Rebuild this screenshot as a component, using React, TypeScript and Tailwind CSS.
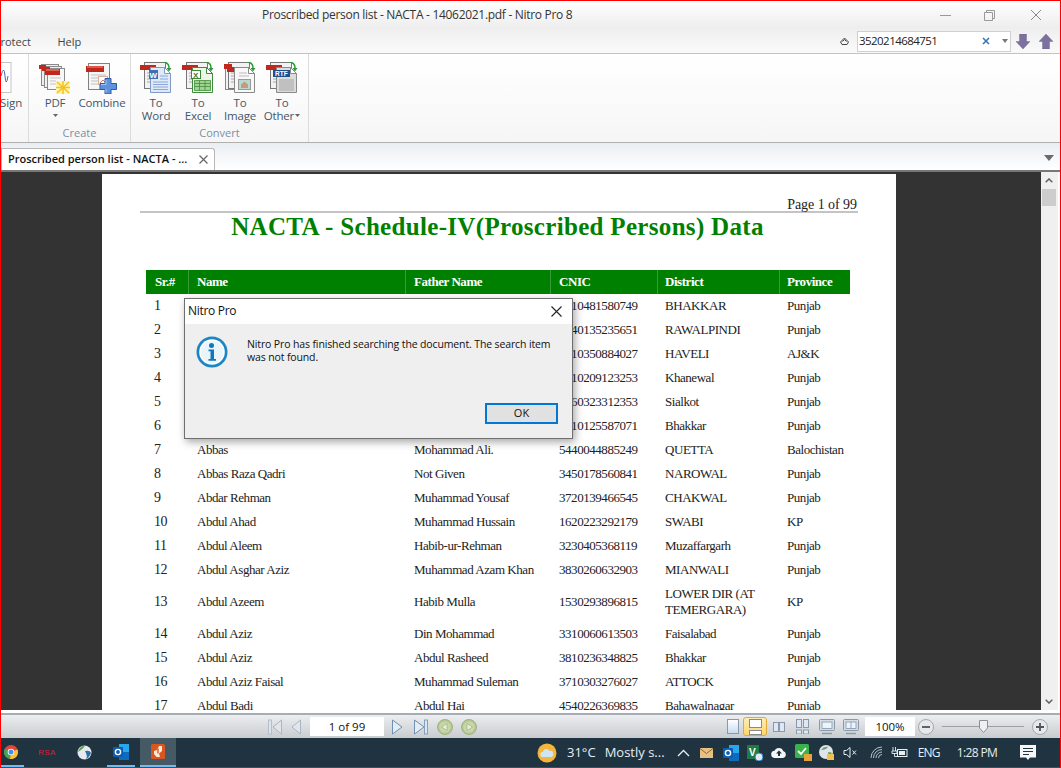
import React from "react";

const ui = "font-['Open_Sans','Noto_Sans',sans-serif]";

type Row = [string, string, string, string, string, string];
const rows: Row[] = [
  ["1", "", "", "3810481580749", "BHAKKAR", "Punjab"],
  ["2", "", "", "3740135235651", "RAWALPINDI", "Punjab"],
  ["3", "", "", "8210350884027", "HAVELI", "AJ&K"],
  ["4", "", "", "3610209123253", "Khanewal", "Punjab"],
  ["5", "", "", "3460323312353", "Sialkot", "Punjab"],
  ["6", "", "", "3810125587071", "Bhakkar", "Punjab"],
  ["7", "Abbas", "Mohammad Ali.", "5440044885249", "QUETTA", "Balochistan"],
  ["8", "Abbas Raza Qadri", "Not Given", "3450178560841", "NAROWAL", "Punjab"],
  ["9", "Abdar Rehman", "Muhammad Yousaf", "3720139466545", "CHAKWAL", "Punjab"],
  ["10", "Abdul Ahad", "Muhammad Hussain", "1620223292179", "SWABI", "KP"],
  ["11", "Abdul Aleem", "Habib-ur-Rehman", "3230405368119", "Muzaffargarh", "Punjab"],
  ["12", "Abdul Asghar Aziz", "Muhammad Azam Khan", "3830260632903", "MIANWALI", "Punjab"],
  ["13", "Abdul Azeem", "Habib Mulla", "1530293896815", "LOWER DIR (AT TEMERGARA)", "KP"],
  ["14", "Abdul Aziz", "Din Mohammad", "3310060613503", "Faisalabad", "Punjab"],
  ["15", "Abdul Aziz", "Abdul Rasheed", "3810236348825", "Bhakkar", "Punjab"],
  ["16", "Abdul Aziz Faisal", "Muhammad Suleman", "3710303276027", "ATTOCK", "Punjab"],
  ["17", "Abdul Badi", "Abdul Hai", "4540226369835", "Bahawalnagar", "Punjab"],
];

function PdfIcon() {
  return (
    <svg width="32" height="32" viewBox="0 0 32 32" className="block">
      <rect x="2.5" y="2.5" width="17" height="21" fill="#efefef" stroke="#8a8a8a" />
      <rect x="5.500" y="4.500" width="17" height="21" fill="#f2f2f2" stroke="#8a8a8a" />
      <rect x="8.500" y="6.500" width="17" height="21" fill="#f8f8f8" stroke="#8a8a8a" />
      <path d="M11 16h11M11 19h6M11 22h6" stroke="#c4c4c4" />
      <rect x="0" y="3" width="7" height="4" fill="#c0281e" />
      <rect x="3" y="5" width="8" height="4" fill="#c0281e" />
      <rect x="6" y="7" width="15" height="6" fill="#c0281e" />
      <rect x="7" y="7" width="13" height="2" fill="#e0604e" />
      <rect x="17" y="19" width="14" height="13" fill="#fff3b0" />
      <path d="M24 19v13M17 25.500h14M18 20l12 11M30 20L18 31" stroke="#f6c11d" strokeWidth="1.500" />
    </svg>
  );
}

function CombineIcon() {
  return (
    <svg width="32" height="32" viewBox="0 0 32 32" className="block">
      <rect x="2.500" y="1.500" width="21" height="26" fill="#f6f6f6" stroke="#808080" />
      <path d="M5 13h15M5 16h7M5 19h7M5 22h7" stroke="#c0c0c0" />
      <rect x="12.500" y="14.500" width="9" height="8" fill="#fff" stroke="#d8b0a0" />
      <path d="M14 21l3-3 2 2" fill="none" stroke="#d08070" />
      <rect x="0" y="4" width="18" height="6" fill="#c0281e" />
      <rect x="1" y="4" width="16" height="2" fill="#de5a48" />
      <path d="M19 16.500h6v5h5.500v6H25v4.500h-6v-4.500h-5v-6h5z" fill="#5f92dc" stroke="#2b5aa4" />
      <path d="M20 18v4.500h-5M20 27v3.500" fill="none" stroke="#a8c8f0" />
    </svg>
  );
}

function ConvertIcon({ kind }: { kind: "word" | "excel" | "image" | "other" }) {
  const fill = kind === "word" ? "#dfe9f8" : kind === "excel" ? "#eef6ea" : kind === "image" ? "#f8f8f8" : "#dcdcdc";
  const edge = kind === "word" ? "#7f9cc8" : kind === "excel" ? "#3f8a3f" : "#8a8a8a";
  return (
    <svg width="32" height="32" viewBox="0 0 32 32" className="block">
      {kind === "image" && <rect x="1.500" y="2.500" width="19" height="25" fill="#f2f2f2" stroke="#888" />}
      <rect x="4.500" y="0.500" width="21" height="26" fill="#f2f2f2" stroke="#777" />
      <path d="M7 11h4M7 14h4M7 17h4M7 20h4" stroke="#a8a8a8" />
      {kind === "image" && <rect x="0" y="2" width="8" height="5" fill="#c0281e" />}
      <rect x={kind === "image" ? 3 : 0} y={kind === "image" ? 5 : 3} width={kind === "image" ? 10 : 16} height="5" fill="#c0281e" />
      <path d="M24 0q5 1 5 6" fill="none" stroke="#2f9a3c" strokeWidth="1.500" />
      <path d="M26.500 6l2.500 3.500 2.500-3.500z" fill="#2f9a3c" />
      <path d="M10.500 5.500h14l6 6v19h-20z" fill={fill} stroke={edge} />
      <path d="M24.500 5.500v6h6z" fill="#fff" stroke={edge} />
      {kind === "word" && (
        <>
          <rect x="9" y="8" width="9" height="9" fill="#3f6fb5" />
          <text x="9.500" y="15.500" fontSize="8" fontWeight="700" fill="#fff" fontFamily="Liberation Sans">W</text>
          <path d="M13 20h15M13 22.500h15M13 25h15M13 27.500h15M20 14h8M20 17h8" stroke="#8aa8d8" />
        </>
      )}
      {kind === "excel" && (
        <>
          <rect x="9.500" y="8.500" width="9" height="8" fill="#fff" stroke="#3a8a3a" />
          <text x="11" y="15.500" fontSize="8" fontWeight="700" fill="#2f7f2f" fontFamily="Liberation Sans">X</text>
          <path d="M12.500 18.500h16v10h-16zM12.500 21.500h16M12.500 24.500h16M17.500 18.500v10M23 18.500v10" fill="#a4d090" stroke="#3f8f3f" strokeWidth="0.800" />
        </>
      )}
      {kind === "image" && (
        <>
          <path d="M15 11h8M15 14h10" stroke="#bbb" />
          <rect x="14.500" y="17.500" width="12" height="10" fill="#b8d8d0" stroke="#999" />
          <path d="M17 26v-3.500l3.500-3 3.500 3V26z" fill="#c89a7a" />
        </>
      )}
      {kind === "other" && (
        <>
          <rect x="7" y="8" width="17" height="7" fill="#1f4f8f" />
          <text x="9" y="14" fontSize="6.500" fontWeight="700" fill="#fff" fontFamily="Liberation Sans">RTF</text>
          <path d="M13 18h15M13 20h15M13 22h15M13 24h15M13 26h15M13 28h15" stroke="#a4a4a4" />
        </>
      )}
    </svg>
  );
}

function RibbonButton({ l1, l2, caret, icon, w = "w-[42px]" }: { l1: string; l2?: string; caret?: boolean; icon: React.ReactNode; w?: string }) {
  return (
    <div className={`${w} flex flex-col items-center shrink-0`}>
      <div className="h-[32px] flex justify-center">{icon}</div>
      <div className="mt-[2px] text-[11.5px] leading-[13px] tracking-[-0.2px] text-[#46566b] text-center whitespace-nowrap">{l1}</div>
      {l2 && (
        <div className="text-[11.5px] leading-[13px] tracking-[-0.2px] text-[#46566b] text-center whitespace-nowrap flex items-center">
          {l2}
          {caret && (
            <svg width="5" height="3" viewBox="0 0 5 3" className="ml-[1px] block"><path d="M0 0h5L2.500 3z" fill="#666" /></svg>
          )}
        </div>
      )}
      {!l2 && caret && (
        <svg width="5" height="3" viewBox="0 0 5 3" className="mt-[5px] block"><path d="M0 0h5L2.500 3z" fill="#666" /></svg>
      )}
    </div>
  );
}

function ArrowBig({ up }: { up?: boolean }) {
  return (
    <svg width="14" height="15" viewBox="0 0 14 15" className={up ? "block" : "block rotate-180"}>
      <path d="M7 0l7 7.500h-3.500V15h-7V7.500H0z" fill="#7b709f" stroke="#6a6088" strokeWidth="0.400" />
    </svg>
  );
}

function NavTri({ dir, bar }: { dir: "l" | "r"; bar?: boolean }) {
  return (
    <svg width="15" height="16" viewBox="0 0 15 16" className="block">
      {dir === "l" ? (
        <>
          {bar && <rect x="0.500" y="1" width="3" height="14" fill="#dfe4ea" stroke="#aab6c4" strokeWidth="0.800" />}
          <path d="M13.500 1v14L5 8z" fill="#e2e6ea" stroke="#aab6c4" />
        </>
      ) : (
        <>
          <path d="M1.500 1v14L11 8z" fill="#e4ecf4" stroke="#7090b4" />
          {bar && <rect x="11.500" y="1" width="3" height="14" fill="#dbe6f2" stroke="#7090b4" strokeWidth="0.800" />}
        </>
      )}
    </svg>
  );
}

function GreenNav({ right }: { right?: boolean }) {
  return (
    <svg width="16" height="16" viewBox="0 0 16 16" className="block">
      <circle cx="8" cy="8" r="7.500" fill="#b6c794" stroke="#9fb27a" />
      <circle cx="8" cy="8" r="5.600" fill="#c9d6ac" />
      <path d={right ? "M6 4.500v7l5.500-3.500z" : "M10 4.500v7L4.500 8z"} fill="#e9efd8" stroke="#95a871" strokeWidth="0.600" />
    </svg>
  );
}

function ViewIcon({ kind }: { kind: number }) {
  if (kind === 0) return <div className="w-[12px] h-[15px] bg-gradient-to-b from-white to-[#c8dcf2] border border-[#8a98a8]" />;
  if (kind === 1)
    return (
      <svg width="15" height="16" viewBox="0 0 15 16" className="block">
        <rect x="1.500" y="0.500" width="12" height="8" fill="#fff" stroke="#8a8a8a" />
        <rect x="1.500" y="11.500" width="12" height="4" fill="#fff" stroke="#8a8a8a" />
      </svg>
    );
  if (kind === 2)
    return (
      <svg width="12" height="10" viewBox="0 0 12 10" className="block">
        <rect x="0.500" y="0.500" width="5" height="9" fill="#dce8f6" stroke="#8a98a8" />
        <rect x="6.500" y="0.500" width="5" height="9" fill="#dce8f6" stroke="#8a98a8" />
      </svg>
    );
  if (kind === 3)
    return (
      <svg width="13" height="15" viewBox="0 0 13 15" className="block">
        <rect x="0.500" y="0.500" width="5" height="8" fill="#dce8f6" stroke="#8a98a8" />
        <rect x="7.500" y="0.500" width="5" height="8" fill="#dce8f6" stroke="#8a98a8" />
        <rect x="0.500" y="11" width="5" height="4" fill="#dce8f6" stroke="#8a98a8" />
        <rect x="7.500" y="11" width="5" height="4" fill="#dce8f6" stroke="#8a98a8" />
      </svg>
    );
  return (
    <svg width="16" height="16" viewBox="0 0 16 16" className="block">
      <rect x="0.500" y="0.500" width="15" height="11" rx="1" fill="#d8dde2" stroke="#8a98a8" />
      <rect x="3" y="3" width="10" height="6.500" fill="#eef3f8" stroke="#6f8aa8" strokeWidth="0.700" />
      {kind === 5 && <path d="M8 3v6.500" stroke="#6f8aa8" strokeWidth="0.700" />}
      <path d="M3 14.500h10" stroke="#8a98a8" strokeWidth="1.400" />
    </svg>
  );
}

function RoundBtn({ plus }: { plus?: boolean }) {
  return (
    <svg width="16" height="16" viewBox="0 0 16 16" className="block">
      <circle cx="8" cy="8" r="7.500" fill="#e6e8ea" stroke="#a2a8ae" />
      <path d={plus ? "M4 8h8M8 4v8" : "M4 8h8"} stroke="#4b5560" strokeWidth="1.800" />
    </svg>
  );
}

function InfoIcon() {
  return (
    <svg width="32" height="32" viewBox="0 0 32 32" className="block">
      <circle cx="16" cy="16" r="15.500" fill="#1c86c4" />
      <circle cx="16" cy="16" r="12.800" fill="#fff" />
      <circle cx="16" cy="16" r="11" fill="#eaf4fb" />
      <circle cx="15.500" cy="9.500" r="2.500" fill="#1178b8" />
      <path d="M12.500 13.500h5.500v9.500h2v1.800h-7.500V23h2v-7.700h-2z" fill="#1178b8" />
    </svg>
  );
}

function Chrome() {
  return (
    <svg width="14" height="14" viewBox="0 0 14 14" className="block">
      <circle cx="7" cy="7" r="7" fill="#e0483a" />
      <path d="M7 7L1 3.500A7 7 0 0 0 6 14z" fill="#3aa757" />
      <path d="M7 7l6.500-2.500A7 7 0 0 1 6 14z" fill="#f9c42d" />
      <circle cx="7" cy="7" r="3.300" fill="#fff" />
      <circle cx="7" cy="7" r="2.500" fill="#4a8af4" />
    </svg>
  );
}

function Globe() {
  return (
    <svg width="15" height="15" viewBox="0 0 15 15" className="block">
      <circle cx="7.500" cy="7.500" r="7" fill="#e6eaee" />
      <path d="M1 7C2 2.500 6 .5 8 .5 7 3 4 5 1 7z" fill="#5fa05a" />
      <path d="M8 6q5-1 6 2-2 5-5 6 2-3-1-8z" fill="#2f6f9f" />
    </svg>
  );
}

function Outlook() {
  return (
    <svg width="16" height="16" viewBox="0 0 16 16" className="block">
      <rect x="6" y="0" width="10" height="8" fill="#28a8ea" />
      <rect x="6" y="8" width="10" height="8" fill="#0f6cbd" />
      <rect x="0" y="3" width="10" height="10" rx="1" fill="#0a5fb4" />
      <circle cx="5" cy="8" r="2.600" fill="none" stroke="#fff" strokeWidth="1.400" />
    </svg>
  );
}

function NitroTask() {
  return (
    <svg width="14" height="15" viewBox="0 0 14 15" className="block">
      <rect width="14" height="15" rx="1.500" fill="#d9571e" />
      <path d="M8 2h3v5L8 9.500 9 13H5.500L3 10V7l3-1z" fill="#fbe9dc" />
      <path d="M7 4.500v5" stroke="#d9571e" strokeWidth="1.400" />
    </svg>
  );
}

function Weather() {
  return (
    <svg width="20" height="20" viewBox="0 0 20 20" className="block">
      <circle cx="10" cy="10" r="9.500" fill="#f4b63a" />
      <path d="M6 14a2.600 2.600 0 0 1 0-5.200 3.400 3.400 0 0 1 6.500-.8 3 3 0 0 1 1.500 6z" fill="#cfe4f4" />
    </svg>
  );
}

function Tray() {
  return (
    <div className="flex items-center text-[#e8eef2] h-full">
      <svg width="13" height="8" viewBox="0 0 13 8" className="ml-[10px] block"><path d="M1 7l5.500-5.500L12 7" fill="none" stroke="#e8eef2" strokeWidth="1.300" /></svg>
      <svg width="13" height="10" viewBox="0 0 13 10" className="ml-[10px] block"><rect width="13" height="10" fill="#e8c084" /><path d="M0 .5l6.500 5 6.500-5" fill="none" stroke="#8a6a3a" /></svg>
      <div className="ml-[10px]"><Outlook /></div>
      <svg width="16" height="16" viewBox="0 0 16 16" className="ml-[8px] block">
        <rect width="12" height="14" fill="#1f7a45" />
        <text x="2" y="11" fontSize="10" fontWeight="700" fill="#fff" fontFamily="Liberation Sans">V</text>
        <circle cx="12" cy="12" r="4" fill="#dfeaf4" stroke="#2f7fc0" />
      </svg>
      <svg width="16" height="11" viewBox="0 0 16 11" className="ml-[8px] block">
        <path d="M4 11a3.600 3.600 0 0 1-.4-7.200A4.600 4.600 0 0 1 12.200 4 3.600 3.600 0 0 1 12 11z" fill="#f4f6f8" />
        <path d="M8 3.500L5 6.500h2V9h2V6.500h2z" fill="#1f3340" />
      </svg>
      <svg width="17" height="17" viewBox="0 0 17 17" className="ml-[8px] block">
        <rect width="14" height="14" rx="1.500" fill="#38b54a" />
        <path d="M3 7l3 3 5-6" fill="none" stroke="#fff" strokeWidth="1.800" />
        <rect x="9" y="10" width="8" height="7" fill="#e9a23b" />
      </svg>
      <svg width="16" height="16" viewBox="0 0 16 16" className="ml-[7px] block">
        <circle cx="7" cy="7" r="7" fill="#dfe6ea" />
        <path d="M2 5q3-4 7-3-2 3-7 3zM9 7q3 0 4 1l-3 5z" fill="#6aa070" />
        <rect x="8" y="9" width="7" height="6" fill="#f3c14a" />
      </svg>
      <svg width="14" height="13" viewBox="0 0 14 13" className="ml-[8px] block">
        <path d="M1 4.500h2.500L7 1.500v10L3.500 8.500H1z" fill="none" stroke="#e8eef2" />
        <path d="M9.500 4.500l3.500 4M13 4.500l-3.500 4" stroke="#e8eef2" />
      </svg>
      <svg width="13" height="13" viewBox="0 0 13 13" className="ml-[13px] block">
        <path d="M1 12a11 11 0 0 1 11-11M3.500 12A8.500 8.500 0 0 1 12 3.500M6 12a6 6 0 0 1 6-6M8.500 12A3.500 3.500 0 0 1 12 8.500" fill="none" stroke="#c5ced4" strokeWidth="0.900" />
      </svg>
      <svg width="17" height="12" viewBox="0 0 17 12" className="ml-[8px] block">
        <path d="M2 0v4M4.500 0v4M1 4h5v2.500H1zM3.500 6.500v3H6" fill="none" stroke="#e8eef2" strokeWidth="0.900" />
        <rect x="6.500" y="2.500" width="9.500" height="7" fill="none" stroke="#e8eef2" />
        <rect x="8" y="4" width="6" height="4" fill="#e8eef2" />
      </svg>
      <span className="ml-[10px] w-[29px] text-[12px] tracking-[-0.8px]">ENG</span>
      <span className="ml-[10px] w-[46px] text-[12px] tracking-[-0.6px] whitespace-nowrap">1:28 PM</span>
      <svg width="16" height="16" viewBox="0 0 16 16" className="ml-[17px] block">
        <path d="M0 0h16v12.500H10l-2 2.500-2-2.500H0z" fill="#f4f6f8" />
        <path d="M3 3.500h10M3 6.500h10M3 9.500h6" stroke="#1f3340" />
      </svg>
    </div>
  );
}

const headPad = ["pl-[9px]", "pl-[8px]", "pl-[8px]", "pl-[8px]", "pl-[7px]", "pl-[7px]"];
const cellPad = ["pl-[8px]", "pl-[9px]", "pl-[9px]", "pl-[9px]", "pl-[8px]", "pl-[8px]"];

export default function App() {
  return (
    <div className={`${ui} relative w-[1061px] h-[768px] overflow-hidden border border-[#ff0000] bg-white flex flex-col`}>
      {/* title + menu */}
      <div className="h-[53px] shrink-0 border-b border-[#c2c2c2] bg-gradient-to-b from-white via-[#eeeeee] to-[#fafafa] flex flex-col">
        <div className="h-[28px] flex items-center pl-[261px]">
          <span className="text-[12px] tracking-[-0.3px] text-[#333] whitespace-nowrap">Proscribed person list - NACTA - 14062021.pdf - Nitro Pro 8</span>
          <div className="ml-auto flex items-center pr-[18px]">
            <div className="w-[11px] h-px bg-[#999]" />
            <svg width="11" height="11" viewBox="0 0 11 11" className="ml-[33px] block"><path d="M.5 2.500h8v8h-8zM2.500 2.500v-2h8v8h-2" fill="none" stroke="#999" /></svg>
            <svg width="12" height="12" viewBox="0 0 12 12" className="ml-[35px] block"><path d="M1 1l10 10M11 1L1 11" stroke="#8a8a8a" /></svg>
          </div>
        </div>
        <div className="flex-1 flex items-center text-[11px] text-[#444]">
          <span className="w-[57px] pt-[3px] -ml-[0.5px] overflow-hidden whitespace-nowrap">rotect</span>
          <span className="pt-[3px]">Help</span>
          <div className="ml-auto flex items-center pr-[7px]">
            <svg width="9" height="8" viewBox="0 0 9 8" className="block"><path d="M.5 5l4-4 4 4-1.500 2.500h-5zM2.500 4.500l2-2 2 2" fill="none" stroke="#444" /></svg>
            <div className="ml-[8px] w-[154px] h-[21px] bg-white border border-[#d0d0d0] flex items-center pl-[1px] pr-[2px]">
              <span className="text-[11.5px] tracking-[-0.55px] text-[#222]">3520214684751</span>
              <svg width="8" height="8" viewBox="0 0 8 8" className="ml-auto block"><path d="M1 1l6 6M7 1L1 7" stroke="#3a77b0" strokeWidth="1.600" /></svg>
              <svg width="6" height="4" viewBox="0 0 6 4" className="ml-[12px] block"><path d="M0 0h6L3 4z" fill="#777" /></svg>
            </div>
            <div className="ml-[5px]"><ArrowBig /></div>
            <div className="ml-[9px]"><ArrowBig up /></div>
          </div>
        </div>
      </div>

      {/* ribbon */}
      <div className="h-[89px] shrink-0 border-b border-[#b0b0b0] bg-gradient-to-b from-white to-[#f6f6f6] flex">
        <div className="w-[28px] border-r border-[#dcdcdc] pt-[8px] overflow-hidden relative">
          <svg width="11" height="31" viewBox="0 0 11 31" className="block">
            <rect x="-4" y="0.500" width="14" height="30" fill="#fff" stroke="#c4c4c4" />
            <path d="M0 14q3-12 4 0t3 0" fill="none" stroke="#3d6fb8" />
          </svg>
          <div className="absolute left-[-1px] top-[41px] text-[11.5px] leading-[16px] tracking-[-0.1px] text-[#46566b]">Sign</div>
        </div>
        <div className="w-[102px] border-r border-[#dcdcdc] flex flex-col">
          <div className="flex pt-[8px] pl-[5px] gap-[2px] flex-1">
            <RibbonButton l1="PDF" caret icon={<PdfIcon />} />
            <RibbonButton l1="Combine" w="w-[48px]" icon={<CombineIcon />} />
          </div>
          <div className="text-[11px] text-center text-[#7f8ea3] pb-[1px]">Create</div>
        </div>
        <div className="w-[178px] border-r border-[#dcdcdc] flex flex-col">
          <div className="flex pt-[8px] pl-[4px] flex-1">
            <RibbonButton l1="To" l2="Word" icon={<ConvertIcon kind="word" />} />
            <RibbonButton l1="To" l2="Excel" icon={<ConvertIcon kind="excel" />} />
            <RibbonButton l1="To" l2="Image" icon={<ConvertIcon kind="image" />} />
            <RibbonButton l1="To" l2="Other" caret icon={<ConvertIcon kind="other" />} />
          </div>
          <div className="text-[11px] text-center text-[#7f8ea3] pb-[1px]">Convert</div>
        </div>
      </div>

      {/* tab strip */}
      <div className="h-[27px] shrink-0 bg-gradient-to-b from-[#eaeef3] to-white flex items-end">
        <div className="w-[214px] h-[22px] bg-white border border-b-0 border-[#b8b8b8] rounded-tr-[3px] flex items-center pl-[6px]">
          <span className="text-[11px] font-semibold text-[#111] whitespace-nowrap">Proscribed person list - NACTA - ...</span>
          <svg width="9" height="9" viewBox="0 0 9 9" className="ml-auto mr-[6px] block"><path d="M.5.5l8 8M8.500.5l-8 8" stroke="#666" strokeWidth="1.200" /></svg>
        </div>
        <svg width="10" height="6" viewBox="0 0 10 6" className="ml-auto mr-[6px] mb-[9px] block"><path d="M0 0h10L5 6z" fill="#6a6a6a" /></svg>
      </div>

      {/* document */}
      <div className="flex-1 min-h-0 flex border-t-2 border-[#777] bg-[#333333]">
        <div className="w-[101px] shrink-0" />
        <div className="w-[794px] mt-[2px] shrink-0 bg-white overflow-hidden font-['Liberation_Serif',serif] text-[13px] text-[#222] tracking-[-0.45px]">
          <div className="ml-[38px] mr-[38px] mt-[21px] h-[18px] border-b-2 border-[#c4c4c4] text-right text-[14px] leading-[20px] tracking-[-0.05px] pr-[1px]">
            Page 1 of 99
          </div>
          <h1 className="h-[30px] text-center ml-[-3px] text-[25px] leading-[27px] font-bold text-[#008000] tracking-[0.32px]">
            NACTA - Schedule-IV(Proscribed Persons) Data
          </h1>
          <div className="ml-[44px] mt-[27px] w-[704px]">
            <div className="grid grid-cols-[42px_217px_145px_107px_122px_71px] h-[24px] bg-[#008000] text-white font-bold">
              {["Sr.#", "Name", "Father Name", "CNIC", "District", "Province"].map((h, i) => (
                <div key={h} className={`${headPad[i]} flex items-center border-l border-[#3a9a3a] first:border-l-0 whitespace-nowrap`}>{h}</div>
              ))}
            </div>
            {rows.map((r) => (
              <div key={r[0]} className={`grid grid-cols-[42px_217px_145px_107px_122px_71px] ${r[0] === "13" ? "h-[40px]" : "h-[24px]"}`}>
                {r.map((c, i) => (
                  <div key={i} className={`${cellPad[i]} flex items-center leading-[16px] ${i === 0 ? "text-[14px]" : ""} ${i === 4 ? "pr-2" : "whitespace-nowrap"}`}>{c}</div>
                ))}
              </div>
            ))}
          </div>
        </div>
        <div className="w-[145px] shrink-0" />
        <div className="flex-1 bg-[#f0f0f0] border-r-2 border-white flex flex-col items-start">
          <div className="w-[15px] h-[17px] flex items-center justify-center">
            <svg width="8" height="5" viewBox="0 0 8 5" className="block"><path d="M.7 4.300L4 1l3.300 3.300" fill="none" stroke="#606060" strokeWidth="1.500" /></svg>
          </div>
          <div className="ml-[1px] w-[14px] h-[17px] bg-[#cdcdcd]" />
          <div className="flex-1" />
          <div className="w-[15px] h-[17px] flex items-center justify-center">
            <svg width="8" height="5" viewBox="0 0 8 5" className="block"><path d="M.7.7L4 4l3.300-3.300" fill="none" stroke="#606060" strokeWidth="1.500" /></svg>
          </div>
        </div>
      </div>

      {/* status */}
      <div className="h-[28px] shrink-0 border-t-[3px] border-white flex flex-col">
        <div className="flex-1 border-t-2 border-t-[#a6adb5] bg-gradient-to-b from-[#eceef0] to-[#c8ccd0] flex items-center pl-[267px] text-[#111]">
          <NavTri dir="l" bar />
          <div className="ml-[4px]"><NavTri dir="l" /></div>
          <div className="ml-[8px] w-[74px] h-[19px] bg-white text-[11.5px] leading-[19px] text-center">1 of 99</div>
          <div className="ml-[7px]"><NavTri dir="r" /></div>
          <div className="ml-[7px]"><NavTri dir="r" bar /></div>
          <div className="ml-[9px]"><GreenNav /></div>
          <div className="ml-[8px]"><GreenNav right /></div>
          <div className="ml-[250px]"><ViewIcon kind={0} /></div>
          <div className="ml-[4px] w-[24px] h-[19px] rounded-[3px] border border-[#e0a93a] bg-gradient-to-b from-[#fdeeb5] to-[#fbd66d] flex items-center justify-center"><ViewIcon kind={1} /></div>
          <div className="ml-[6px]"><ViewIcon kind={2} /></div>
          <div className="ml-[11px]"><ViewIcon kind={3} /></div>
          <div className="ml-[10px]"><ViewIcon kind={4} /></div>
          <div className="ml-[8px]"><ViewIcon kind={5} /></div>
          <div className="ml-[6px] w-[50px] h-[19px] bg-white text-[11.5px] leading-[19px] text-center">100%</div>
          <div className="ml-[3px]"><RoundBtn /></div>
          <div className="ml-[8px] w-[82px] h-px bg-[#9aa0a6] relative">
            <svg width="9" height="13" viewBox="0 0 9 13" className="absolute left-[37px] top-[-6px] block"><path d="M.5.500h8v7.500L4.500 12.500.5 8z" fill="#eef0f2" stroke="#8a9098" /></svg>
          </div>
          <div className="ml-[8px]"><RoundBtn plus /></div>
        </div>
      </div>

      {/* taskbar */}
      <div className="h-[29px] shrink-0 bg-[#1f3440] flex items-stretch">
        <div className="w-[23px] border-b-2 border-[#76b9ed] flex items-center justify-center pr-[4px]"><Chrome /></div>
        <div className="w-[46px] flex items-center justify-center text-[8px] tracking-[0.4px] text-[#d8203a] font-['Liberation_Sans',sans-serif]">RSA</div>
        <div className="w-[28px] flex items-center justify-center"><Globe /></div>
        <div className="w-[28px] ml-[9px] border-b-2 border-[#76b9ed] flex items-center justify-center"><Outlook /></div>
        <div className="w-[36px] ml-[5px] bg-[#465a66] border-b-2 border-[#76b9ed] flex items-center justify-center"><NitroTask /></div>
        <div className="ml-[361px] flex items-center text-[#e8eef2]">
          <Weather />
          <span className="ml-[10px] text-[13px] whitespace-nowrap">31°C</span>
          <span className="ml-[9px] w-[62px] text-[13px] whitespace-nowrap">Mostly s...</span>
          <Tray />
        </div>
      </div>

      {/* dialog */}
      <div className="absolute left-[183px] top-[297px] w-[389px] h-[141px] bg-[#efefef] border border-[#6f6f6f] shadow-[2px_3px_8px_rgba(0,0,0,0.35)] flex flex-col">
        <div className="h-[25px] bg-white flex items-center pl-[3px] pr-[10px] pb-[1px] shrink-0">
          <span className="text-[12px] tracking-[-0.3px] text-[#111]">Nitro Pro</span>
          <svg width="11" height="11" viewBox="0 0 11 11" className="ml-auto block"><path d="M.5.500l10 10M10.500.500l-10 10" stroke="#222" strokeWidth="1.100" /></svg>
        </div>
        <div className="flex pl-[11px] pt-[12px]">
          <InfoIcon />
          <p className="ml-[19px] mt-[2px] w-[312px] text-[10.5px] leading-[13px] tracking-[-0.13px] text-[#111]">Nitro Pro has finished searching the document. The search item was not found.</p>
        </div>
        <div className="mt-auto mb-[14px] mr-[14px] self-end w-[73px] h-[21px] bg-[#e1e1e1] border-2 border-[#0078d7] flex items-center justify-center text-[11px] text-[#111]">OK</div>
      </div>
    </div>
  );
}
